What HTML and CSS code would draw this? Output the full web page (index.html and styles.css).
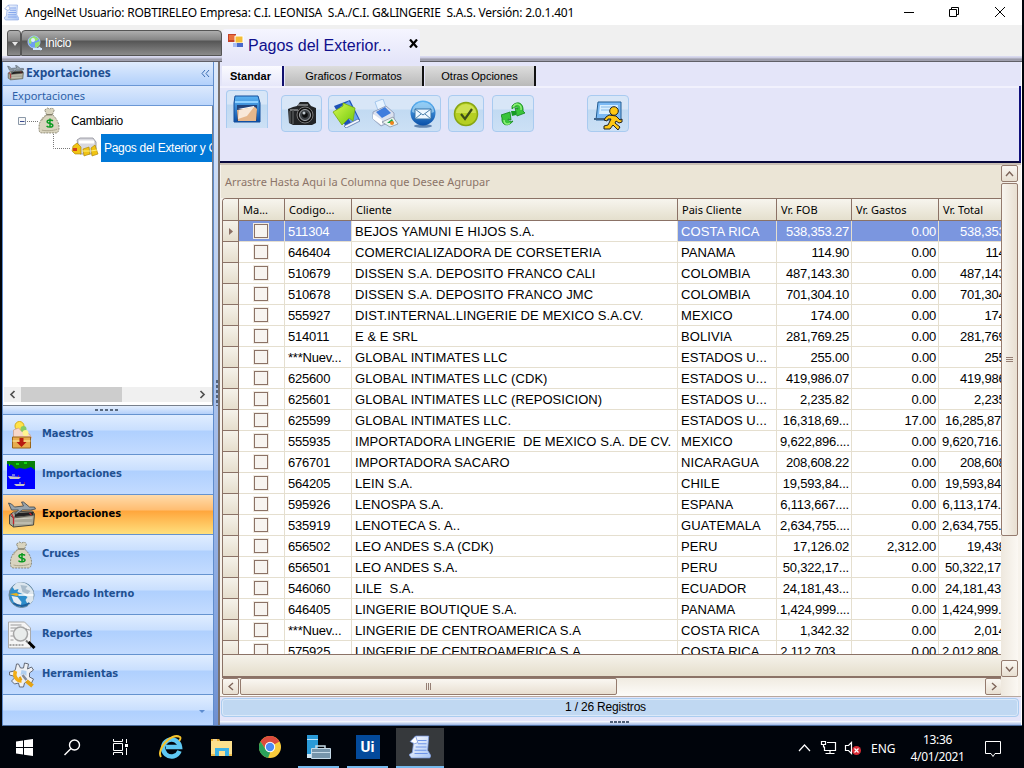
FILE: index.html
```html
<!DOCTYPE html>
<html lang="es">
<head>
<meta charset="utf-8">
<title>AngelNet</title>
<link rel="stylesheet" href="styles.css">
</head>
<body>
<svg class="defs" width="0" height="0">
  <defs>
    <linearGradient id="gBlue" x1="0" y1="0" x2="0" y2="1"><stop offset="0" stop-color="#5cb4f4"/><stop offset="1" stop-color="#0a4fa8"/></linearGradient>
    <linearGradient id="gGreen" x1="0" y1="0" x2="1" y2="1"><stop offset="0" stop-color="#d8f850"/><stop offset="1" stop-color="#6cc80c"/></linearGradient>
    <linearGradient id="gPage" x1="0" y1="0" x2="1" y2="1"><stop offset="0" stop-color="#ffffff"/><stop offset="1" stop-color="#a8c4f4"/></linearGradient>
  </defs>
  <symbol id="doc" viewBox="0 0 20 22"><path d="M6 1h12l-1 13 3 5-1 2H2l-2-3 3-2 1-8-2-2z" fill="url(#gPage)" stroke="#7d9be0" stroke-width=".7"/><path d="M6 1L1 6l4 2 3-1z" fill="#fff" stroke="#6c8cd8" stroke-width=".7"/><path d="M8 5h8M8 8h8M6 11h10M5 14h11M5 17h12" stroke="#6e94e8" stroke-width="1"/></symbol>
  <symbol id="bag" viewBox="0 0 24 28"><path d="M7 3l3-2 2 1 3-1 2 2-2 5c3 2 7 8 7 13 0 3-1 6-3 6H4c-3 0-3-3-3-6C1 15 5 10 9 8z" fill="#d9d4bf" stroke="#77735f" stroke-width=".8" stroke-dasharray="2 1"/><path d="M4 14c2-4 4-5 6-6h5M4 24c3 1 12 1 16-1" stroke="#aaa48c" fill="none"/><path d="M9 8h6" stroke="#6b6656"/><path d="M15.500 14.500c-1-1.500-6-1.500-6 .8 0 2.500 6 1.200 6 3.800 0 2.300-5.500 2.200-6.500.5M12.500 12v9.500" stroke="#0a9a20" stroke-width="1.500" fill="none"/></symbol>
  <symbol id="plane" viewBox="0 0 28 28"><path d="M2 14l4-3 19-1 2 3-1 11-20 2-4-3z" fill="#a9a899" stroke="#4b4940"/><path d="M2 14l4 3 21-3M6 17v9" stroke="#5c5a50" fill="none"/><path d="M7 18l18-1M7 22h17" stroke="#d0cfc2"/><path d="M8 12l18-1v3l-19 2z" fill="#222"/><path d="M4 13l2 4v6M22 12l2 2" stroke="#c3242c" stroke-width="1.300" fill="none"/><path d="M1 2l3 1 3 3 9-1-2-4 2 0 6 5 5 0 1 2-5 1-8 0-6 4-2 0 4-4-7 0z" fill="#97a3ac" stroke="#39424a" stroke-width=".8"/></symbol>
  <symbol id="globe" viewBox="0 0 26 28"><circle cx="13" cy="14" r="12.500" fill="#2d8dcb" stroke="#6f8698"/><path d="M8 2c7-3 15 3 17 9v8l-5 6-3-6 2-3-5-3-5-2 1-3-4 1-2-3z" fill="#dce6ee"/><path d="M12 4l7 1-2 3 5 2-3 3-5-2z" fill="#a9bccb"/><path d="M3 15l6 1 4 5-1 5-6-3z" fill="#e5edf4"/><path d="M1 13l7-1 3 2-3 1z" fill="#e8b31d"/><path d="M10 14h15" stroke="#fff" stroke-width="1.500"/><path d="M5 22q8 6 16 0" stroke="#1c5f9c" stroke-width="2" fill="none"/></symbol>
</svg>

<div class="desktop">
  <main class="window">
    <header class="titlebar">
      <svg class="app-icon" width="15" height="17"><use href="#doc"/></svg>
      <span class="title">AngelNet Usuario: ROBTIRELEO Empresa: C.I. LEONISA&nbsp; S.A./C.I. G&amp;LINGERIE&nbsp; S.A.S. Versión: 2.0.1.401</span>
      <svg class="win-controls" width="110" height="24" fill="none" stroke="#000"><path d="M5 11.500h10"/><path d="M50.500 8.500h7v7h-7zM52.500 8.500v-2h7v7h-2"/><path d="M96 6l10 10M106 6l-10 10"/></svg>
    </header>
    <nav class="doc-tabs">
      <span class="tab-menu"><svg width="7" height="4"><path d="M0 0h6L3 4z" fill="#e8e8e8"/></svg></span>
      <span class="doc-tab"><svg width="17" height="17" viewBox="0 0 17 17"><circle cx="7" cy="7" r="6" fill="#6d9df0" stroke="#aac8fa"/><path d="M2 4l5-3 5 3-3 2-4-1-1 4-2-1zM8 8l5-2-1 5-4 2z" fill="#95e26c"/><circle cx="6" cy="5" r="2" fill="#dff0ff"/><path d="M6 14h9M12 12l2 3" stroke="#cfe5ff" stroke-width="2"/></svg>Inicio</span>
      <span class="doc-tab active"><svg width="16" height="16" viewBox="0 0 16 16"><path d="M0 1h8v8H0z" fill="#c5422a"/><path d="M1 2h6v5H1z" fill="#e8703c"/><path d="M7 3h8v7H7z" fill="#f4bd35" stroke="#fff"/><path d="M8 10h7v4H8z" fill="#4868ca"/><path d="M5 10h4v4H5z" fill="#a7bcf5"/></svg><span class="doc-name">Pagos del Exterior...</span><svg class="close" width="10" height="9"><path d="M1 .5l7 8M8 .5l-7 8" stroke="#000" stroke-width="2.200"/></svg></span>
    </nav>
    <div class="body">
      <aside class="sidebar">
        <div class="side-head"><svg width="17" height="16" viewBox="0 0 28 28" preserveAspectRatio="none"><use href="#plane"/></svg><b>Exportaciones</b><svg class="collapse" width="9" height="9" fill="none" stroke="#3d6eb3"><path d="M4 1L1 4.500 4 8M8 1L5 4.500 8 8"/></svg></div>
        <div class="side-sub">Exportaciones</div>
        <div class="tree">
          <div class="node root"><svg width="20" height="28" fill="none"><path d="M.5 10.500h7v7h-7z" stroke="#8b98a8" fill="#f8f8f8"/><path d="M2 14.500h4.500" stroke="#3b4c90"/><path d="M9 14.500h11" stroke="#777" stroke-dasharray="1 1"/></svg><svg width="23" height="27"><use href="#bag"/></svg><span>Cambiario</span></div>
          <div class="node leaf"><svg width="17" height="28" fill="none" stroke="#777" stroke-dasharray="1 1"><path d="M.5 0v14.500h17"/></svg><svg width="28" height="22" viewBox="0 0 28 22"><path d="M6 3l3-2h13l3 4v8l-4 4H9z" fill="#d9d9df" stroke="#8c8c96" stroke-width=".8"/><path d="M8 5h15" stroke="#fff" stroke-width="3"/><path d="M2 9l4-3 4 4v7H4l-3-3zM12 12l6-2 1 7-6 2zM20 11l4-3 3 9-6 2z" fill="#f1c414" stroke="#a67f00" stroke-width=".6"/><path d="M2 11h4v3H2z" fill="#d44019"/><path d="M11 14h8M20 14l6-1" stroke="#fff17b"/></svg><span class="picked">Pagos del Exterior y Cre</span></div>
          <div class="tree-scroll"><svg width="17" height="15" fill="none" stroke="#505050" stroke-width="1.700"><path d="M10.500 4L7 7.500l3.500 3.500"/></svg><i></i><svg width="18" height="15" fill="none" stroke="#505050" stroke-width="1.700"><path d="M6.500 4l3.500 3.500L6.500 11"/></svg></div>
        </div>
        <div class="grip"><i></i></div>
        <ul class="modules">
          <li><svg width="28" height="30" viewBox="0 0 28 30"><circle cx="12" cy="6" r="4.500" fill="#ffe34a" stroke="#d9ac1a"/><path d="M6 10l5-2 4 4 7 2 2 4H6z" fill="#f7d7c8" stroke="#cf9070" stroke-width=".6"/><circle cx="16" cy="9" r="3" fill="#86cc67"/><circle cx="18" cy="13" r="3" fill="#fff58e"/><path d="M5 17h18v11H5z" fill="#e8ad4e" stroke="#9a6518"/><path d="M5 21h18" stroke="#fff0a0"/><path d="M12 18h4v4h3l-5 5-5-5h3z" fill="#b71b10"/></svg><b>Maestros</b></li>
          <li><svg width="28" height="28"><path d="M0 0h28v28H0z" fill="#0000ff"/><path d="M0 0h28v9l-4-3-6 2-5-1-4 1-4-4-5-1z" fill="#088008"/><path d="M9 3h3M17 2h3M2 4h1" stroke="#13d713" stroke-width="2"/><path d="M1 15l13 1-2 2H3zM7 23h11l-1 2H9z" fill="#c6c6c6"/><path d="M5 14h3M12 22h2" stroke="#ddd"/><path d="M11 15h1M17 22h1" stroke="#e22"/></svg><b>Importaciones</b></li>
          <li class="on"><svg width="29" height="28"><use href="#plane"/></svg><b>Exportaciones</b></li>
          <li><svg width="26" height="28"><use href="#bag"/></svg><b>Cruces</b></li>
          <li><svg width="28" height="28"><use href="#globe"/></svg><b>Mercado Interno</b></li>
          <li><svg width="28" height="28" viewBox="0 0 28 28"><path d="M1 1h16l6 6v20H1z" fill="#f5f5f5" stroke="#aaa"/><path d="M3 4h11M3 7h6M3 10h3M3 15h3M3 19h3" stroke="#999"/><path d="M2 24h15M18 8l4 1" stroke="#555" stroke-dasharray="2 1"/><circle cx="13" cy="13" r="7" fill="#e9eceb" stroke="#a5a5a5" stroke-width="1.500"/><path d="M18.500 19.500l2 2" stroke="#777" stroke-width="2"/><path d="M21 21l6 6" stroke="#000" stroke-width="3"/></svg><b>Reportes</b></li>
          <li><svg width="28" height="28" viewBox="0 0 28 28"><path d="M9 3l2 0 2 4 3 0 1-5 4 1-1 5 4-2 2 3-4 3v4l4 2-2 4-4-2-3 2-1 4h-4l-1-4-4 1-3-3 3-3-1-2-4-1v-3l5-1 1-2z" fill="#eef0f4" stroke="#656b78"/><path d="M8 10c-2 5 1 10 6 10" stroke="#f2ae16" stroke-width="3.500" fill="none"/><path d="M14 9l5 1v5l-3-2-3 1z" fill="#b0cff0"/><path d="M14 17l-2 1M19 20l6 5" stroke="#e5a313" stroke-width="4"/><path d="M15 14l4 5" stroke="#848b99" stroke-width="2.500"/></svg><b>Herramientas</b></li>
          <li class="last"><svg width="7" height="4"><path d="M0 0h6L3 3z" fill="#5e8dd0"/></svg></li>
        </ul>
      </aside>
      <div class="splitter"><i></i></div>
      <section class="content">
        <div class="ribbon-tabs"><span class="rt current">Standar</span><span class="rt second">Graficos / Formatos</span><span class="rt third">Otras Opciones</span></div>
        <div class="ribbon">
          <span class="tool save"><svg width="30" height="32" viewBox="0 0 30 32"><path d="M3 2h23l2 7v19H2V9z" fill="url(#gBlue)" stroke="#144f9b"/><path d="M3 8h23" stroke="#8fd1ff" stroke-width="2"/><path d="M5 11h20v16H5z" fill="#22447c"/><path d="M6 15l16-3 1 3H6z" fill="#fff"/><path d="M5 16l18-3 2 2-1 12H6z" fill="#e6b78b"/><path d="M7 16l15-3-7 9-9 3z" fill="#f8e8d8"/></svg></span>
          <span class="tool cam"><svg width="30" height="26" viewBox="0 0 30 26"><path d="M1 8l5-2 4-1 3-4h8l3 4 5 2v15l-4 2H6l-4-2z" fill="#222426"/><path d="M11 4h10M3 9h8" stroke="#8a8d90" stroke-width="1.500"/><path d="M3 10v12M6 9v14" stroke="#515456" stroke-width="1.500"/><circle cx="18" cy="14" r="8" fill="#111" stroke="#777"/><circle cx="18" cy="14" r="5.500" fill="#3a3e42" stroke="#a5a9ad"/><circle cx="18" cy="14" r="2.800" fill="#0b0c0d"/><circle cx="17" cy="12" r="1.500" fill="#c0c8ce"/></svg></span>
          <span class="tool trio">
            <svg width="29" height="29" viewBox="0 0 29 29"><path d="M2 7l16-6 10 20-14 7z" fill="#1d51b8"/><path d="M17 2l10 19-7 4L8 8z" fill="#69a3ef"/><path d="M12 27l14-7 2 2-14 7z" fill="#f4f7ff" stroke="#46649d" stroke-width=".7"/><path d="M1 13l10-6 0-3 12 5-2 13-4-3-7 7z" fill="url(#gGreen)" stroke="#78ab0c" stroke-width=".8"/></svg>
            <svg width="28" height="29" viewBox="0 0 28 29"><path d="M4 3l8-3 4 11-8 3z" fill="#e7f3ff" stroke="#8cb7e6" stroke-width=".7"/><path d="M2 13l13-6 8 7v7L10 27l-8-7z" fill="#dce2ef" stroke="#8794b3" stroke-width=".8"/><path d="M5 13l9-5 6 6-9 5z" fill="#407ddd"/><path d="M2 15l9 6v5l-9-6z" fill="#fff"/><path d="M11 23l11-5 5 7-8 3z" fill="#ecf4ef" stroke="#66758a" stroke-width=".6"/><path d="M16 24l5-4 2 4z" fill="#1aa844"/><circle cx="21" cy="24" r="2" fill="#f0831c"/></svg>
            <svg width="28" height="28" viewBox="0 0 28 28"><ellipse cx="14" cy="26" rx="9" ry="1.800" fill="#1b4a86" opacity=".6"/><circle cx="14" cy="13" r="12.500" fill="url(#gBlue)"/><path d="M3 12a11 10 0 0 1 22 0q-11 6-22 0z" fill="#bde5fa" opacity=".6"/><path d="M6 9h16v10H6z" fill="#eef8ff" stroke="#3372a9"/><path d="M6 9l8 6 8-6M6 19l6-5M22 19l-6-5" fill="none" stroke="#467da8"/></svg>
          </span>
          <span class="tool check"><svg width="26" height="26" viewBox="0 0 26 26"><circle cx="13" cy="13" r="11.500" fill="#b5cf22" stroke="#87a513" stroke-width="1.500"/><path d="M3 12a10 9 0 0 1 20 0z" fill="#cee151"/><path d="M8 13l4 5 7-10" stroke="#3c4c19" stroke-width="2.200" fill="none"/></svg></span>
          <span class="tool swap"><svg width="24" height="26" viewBox="0 0 24 26"><path d="M11 5c5-6 12-3 11 5l2 2-8 3-2-8 3 1c-1-3-4-2-6 0zM12 20c-4 6-12 5-11-3l-1-3 9-3 1 8-3-1c0 2 3 3 5 2z" fill="#38c43a" stroke="#12871b" stroke-width=".8"/><path d="M12 6c3-5 9-3 8 3M3 19c0 4 3 5 6 3" stroke="#90ef78" stroke-width="1.500" fill="none"/><path d="M10 10h5v4l-4 1z" fill="#159a23"/></svg></span>
          <span class="tool exit"><svg width="29" height="30" viewBox="0 0 29 30"><path d="M4 2h23v18H2z" fill="#7cbaf4" stroke="#225c91"/><path d="M6 5h18l-1 9H5z" fill="#d9efff"/><path d="M7 7h12M7 10h8" stroke="#85b9e9"/><path d="M0 19h14" stroke="#3e6288" stroke-width="2"/><circle cx="20" cy="11" r="4.300" fill="#ffc814" stroke="#222"/><path d="M12 17l3-2 7 1 4 4 2-1v3l-3 1-3-2-1 2 5 4-2 3-5-5-3 4h-6l0-3 4-1 3-6-3 0-1 2-3-1z" fill="#ffc814" stroke="#222"/></svg></span>
        </div>
        <div class="grid-box">
          <div class="grid-main">
            <div class="group-hint"><span>Arrastre Hasta Aqui la Columna que Desee Agrupar</span></div>
            <div class="viewport">
              <table>
                <colgroup><col class="c0"><col class="c1"><col class="c2"><col class="c3"><col class="c4"><col class="c5"><col class="c6"><col class="c7"></colgroup>
                <thead><tr><th><th>Ma...<th>Codigo...<th>Cliente<th>Pais Cliente<th>Vr. FOB<th>Vr. Gastos<th>Vr. Total</tr></thead>
                <tbody>
                <tr class="focus"><td><svg width="4" height="7"><path d="M0 0l4 3.500L0 7z" fill="#8b6f64"/></svg><td><i></i><td>511304<td>BEJOS YAMUNI E HIJOS S.A.<td>COSTA RICA<td>538,353.27<td>0.00<td>538,353.27
                <tr><td><td><i></i><td>646404<td>COMERCIALIZADORA DE CORSETERIA<td>PANAMA<td>114.90<td>0.00<td>114.90
                <tr><td><td><i></i><td>510679<td>DISSEN S.A. DEPOSITO FRANCO CALI<td>COLOMBIA<td>487,143.30<td>0.00<td>487,143.30
                <tr><td><td><i></i><td>510678<td>DISSEN S.A. DEPOSITO FRANCO JMC<td>COLOMBIA<td>701,304.10<td>0.00<td>701,304.10
                <tr><td><td><i></i><td>555927<td>DIST.INTERNAL.LINGERIE DE MEXICO S.A.CV.<td>MEXICO<td>174.00<td>0.00<td>174.00
                <tr><td><td><i></i><td>514011<td>E &amp; E SRL<td>BOLIVIA<td>281,769.25<td>0.00<td>281,769.25
                <tr><td><td><i></i><td>***Nuev...<td>GLOBAL INTIMATES LLC<td>ESTADOS U...<td>255.00<td>0.00<td>255.00
                <tr><td><td><i></i><td>625600<td>GLOBAL INTIMATES LLC (CDK)<td>ESTADOS U...<td>419,986.07<td>0.00<td>419,986.07
                <tr><td><td><i></i><td>625601<td>GLOBAL INTIMATES LLC (REPOSICION)<td>ESTADOS U...<td>2,235.82<td>0.00<td>2,235.82
                <tr><td><td><i></i><td>625599<td>GLOBAL INTIMATES LLC.<td>ESTADOS U...<td>16,318,69...<td>17.00<td class="long">16,285,87
                <tr><td><td><i></i><td>555935<td>IMPORTADORA LINGERIE&nbsp; DE MEXICO S.A. DE CV.<td>MEXICO<td>9,622,896....<td>0.00<td class="long">9,620,716.
                <tr><td><td><i></i><td>676701<td>IMPORTADORA SACARO<td>NICARAGUA<td>208,608.22<td>0.00<td>208,608.22
                <tr><td><td><i></i><td>564205<td>LEIN S.A.<td>CHILE<td>19,593,84...<td>0.00<td class="long">19,593,84
                <tr><td><td><i></i><td>595926<td>LENOSPA S.A.<td>ESPANA<td>6,113,667....<td>0.00<td class="long">6,113,174.
                <tr><td><td><i></i><td>535919<td>LENOTECA S. A..<td>GUATEMALA<td>2,634,755....<td>0.00<td class="long">2,634,755.
                <tr><td><td><i></i><td>656502<td>LEO ANDES S.A (CDK)<td>PERU<td>17,126.02<td>2,312.00<td>19,438.02
                <tr><td><td><i></i><td>656501<td>LEO ANDES S.A.<td>PERU<td>50,322,17...<td>0.00<td class="long">50,322,17
                <tr><td><td><i></i><td>546060<td>LILE&nbsp; S.A.<td>ECUADOR<td>24,181,43...<td>0.00<td class="long">24,181,43
                <tr><td><td><i></i><td>646405<td>LINGERIE BOUTIQUE S.A.<td>PANAMA<td>1,424,999....<td>0.00<td class="long">1,424,999.
                <tr><td><td><i></i><td>***Nuev...<td>LINGERIE DE CENTROAMERICA S.A<td>COSTA RICA<td>1,342.32<td>0.00<td>2,014.52
                <tr><td><td><i></i><td>575925<td>LINGERIE DE CENTROAMERICA S.A<td>COSTA RICA<td>2,112,703....<td>0.00<td class="long">2,012,808.
                </tbody>
              </table>
            </div>
            <div class="summary"></div>
            <div class="hscroll"><span class="btn"><svg width="6" height="9"><path d="M5 1L1 4.500 5 8" fill="none" stroke="#7d6459" stroke-width="1.400"/></svg></span><span class="thumb"><svg width="7" height="7"><path d="M1.500 0v7M3.500 0v7M5.500 0v7" stroke="#8a7266" stroke-width=".9"/></svg></span><span class="btn end"><svg width="6" height="9"><path d="M1 1l4 3.500L1 8" fill="none" stroke="#7d6459" stroke-width="1.400"/></svg></span></div>
          </div>
          <div class="vscroll"><span class="btn"><svg width="9" height="6"><path d="M1 5l3.500-4L8 5" fill="none" stroke="#7d6459" stroke-width="1.400"/></svg></span><span class="thumb"><svg width="7" height="7"><path d="M0 1.500h7M0 3.500h7M0 5.500h7" stroke="#8a7266" stroke-width=".9"/></svg></span><span class="btn down"><svg width="9" height="6"><path d="M1 1l3.500 4L8 1" fill="none" stroke="#7d6459" stroke-width="1.400"/></svg></span></div>
        </div>
        <div class="status"><span>1 / 26 Registros</span></div>
        <div class="bottom-grip"><i></i></div>
      </section>
    </div>
  </main>
  <footer class="taskbar">
    <span class="task"><svg width="17" height="17"><path d="M0 2.500l7-1v6.500H0zM8 1.300l9-1.300v8H8zM0 9h7v6.500l-7-1zM8 9h9v8l-9-1.300z" fill="#fff"/></svg></span>
    <span class="task"><svg width="17" height="17" fill="none" stroke="#fff" stroke-width="1.400"><circle cx="10.500" cy="6" r="5"/><path d="M7 9.500L.5 16"/></svg></span>
    <span class="task"><svg width="17" height="16" fill="none" stroke="#fff"><path d="M1.500 0v2.500h9V0M1.500 4.500h9v7h-9zM1.500 16v-2.500h9V16M14.500 0v4M14.500 9v7" /><path d="M13 5h3v3h-3z" fill="#fff" stroke="none"/></svg></span>
    <span class="task wide"><svg width="24" height="24" viewBox="0 0 24 24"><path d="M20.500 16A8.500 8.500 0 1 1 21 12H7" fill="none" stroke="#5fc9f3" stroke-width="4.500"/><path d="M2 22C-3 15 12-3 21 2c1 1 0 3-1 4" fill="none" stroke="#f6c42c" stroke-width="2"/></svg></span>
    <span class="task"><svg width="22" height="19" viewBox="0 0 22 19"><path d="M0 1h8l1 2h12v15H0z" fill="#fce08d"/><path d="M0 1h8l1 2H0z" fill="#e7ac2e"/><path d="M2 2h4" stroke="#fff"/><path d="M4 10h14v8h-4v-5H8v5H4z" fill="#3cb2e6"/><path d="M0 17h4M18 17h3" stroke="#edbd4c" stroke-width="2"/></svg></span>
    <span class="task"><svg width="22" height="22" viewBox="0 0 22 22"><circle cx="11" cy="11" r="11" fill="#f9cb3c"/><path d="M1.500 5.500A11 11 0 0 1 20.500 5.500L16 8H11L7 14z" fill="#dc4b3e"/><path d="M1.500 5.500L6.700 13.500 11 16l0 1-2 5A11 11 0 0 1 1.500 5.500z" fill="#2ba25a"/><circle cx="11" cy="11" r="5.200" fill="#fff"/><circle cx="11" cy="11" r="4.200" fill="#4c8bf5"/></svg></span>
    <span class="task open"><svg width="24" height="24" viewBox="0 0 24 24"><path d="M0 0h11v23H0z" fill="#2a9ad8"/><path d="M0 4.500h11" stroke="#b8e4ff"/><path d="M0 19h5v4H0z" fill="#d4e8f5"/><path d="M9 14v-3h9v3" fill="none" stroke="#c6dbe8" stroke-width="1.500"/><path d="M4.500 13.500h19v10h-19z" fill="#7695ab" stroke="#c5dae8"/><path d="M5 17.500h18" stroke="#c5dae8"/></svg></span>
    <span class="task open"><b class="ui">Ui</b></span>
    <span class="task open focus"><svg width="22" height="24"><use href="#doc"/></svg></span>
    <div class="tray">
      <svg width="64" height="24" fill="none" stroke="#fff" stroke-width="1.200"><path d="M1 15l5.500-6 5.500 6"/><path d="M29 6.500h8.500v8H26.500v-4M32 14.500v3M27.500 17.500h9M23.500 5.500h4v3h-4zM25.500 8.500v3"/><path d="M47.500 9.500h3l3-3v11l-3-3h-3z"/><circle cx="58.500" cy="14.500" r="4.500" fill="#d92b35" stroke="none"/><path d="M56.500 12.500l4 4M60.500 12.500l-4 4"/></svg>
      <span class="lang">ENG</span>
      <span class="clock"><span>13:36</span><span>4/01/2021</span></span>
      <svg class="note" width="17" height="17" fill="none" stroke="#fff"><path d="M.5.500h15v12H10l-2 3-2-3H.5z"/></svg>
    </div>
  </footer>
</div>
</body>
</html>
```
FILE: styles.css
```css
* { box-sizing: border-box; }
body { margin: 0; font-family: "Liberation Sans", sans-serif; }
svg { display: block; flex: none; }
i { display: block; flex: none; }
.defs { position: absolute; }
.desktop { width: 1024px; height: 768px; overflow: hidden; background: #00040b; display: flex; flex-direction: column; }
.window { width: 1020px; height: 726px; margin-left: 2px; flex: none; display: flex; flex-direction: column; border-bottom: 1px solid #4d6e9e; background: #e4e5f9; }

.titlebar { height: 25px; flex: none; background: #fff; display: flex; align-items: center; padding-left: 2px; }
.title { font: 12px/16px "Noto Sans", sans-serif; letter-spacing: -.21px; margin-left: 6px; white-space: nowrap; }
.win-controls { margin-left: auto; margin-right: 13px; }

.doc-tabs { height: 37px; flex: none; background: linear-gradient(#f0f0f0 31px, #dedff6 31px, #c8c8dc 33px, #9a9aa8 34px, #a2a2b0 36px, #606068 36px); display: flex; padding-left: 5px; }
.tab-menu { width: 14px; height: 26px; margin-top: 5px; padding: 11px 0 0 4px; border: 1px solid #555; border-radius: 3px 3px 0 0; background: linear-gradient(#b0b0b0, #858585 10px, #555 11px, #8a8a8a); }
.doc-tab { display: flex; align-items: center; width: 201px; height: 26px; margin-top: 5px; padding-left: 5px; color: #fff; font-size: 12px; letter-spacing: -.3px; border: 1px solid #555; border-radius: 4px 4px 0 0; background: linear-gradient(#adadad, #858585 9px, #555 10px, #8a8a8a); gap: 1px; }
.doc-tab.active { width: 198px; height: 33px; margin-top: 4px; padding: 0 0 4px 6px; border: 0; background: linear-gradient(#f5f5ff, #e4e5f9); color: #10108c; align-items: flex-start; gap: 4px; }
.doc-tab.active > svg { margin-top: 4px; }
.doc-name { font-size: 16px; line-height: 18px; letter-spacing: 0; margin-top: 8px; }
.doc-tab.active .close { margin: 10px 0 0 14px; }

.body { flex: 1; min-height: 0; display: flex; }
.sidebar { width: 212px; flex: none; display: flex; flex-direction: column; border: 1px solid #5f8ccc; border-top: 0; background: #bdd7fb; }
.side-head { height: 24px; flex: none; display: flex; align-items: center; padding: 0 3px 1px 4px; background: linear-gradient(#e0ecfd, #b2d0fb); border-bottom: 1px solid #6b97d5; color: #1f4f91; }
.side-head b { font: bold 12px/16px "Open Sans", sans-serif; margin-left: 2px; }
.collapse { margin-left: auto; }
.side-sub { height: 20px; flex: none; padding-left: 9px; font: 11px/19px "Noto Sans", sans-serif; color: #2c5fa7; background: linear-gradient(#dce9fd, #bcd6fb); border-bottom: 1px solid #6b97d5; }
.tree { height: 300px; flex: none; background: #fff; border: 1px solid #777f8b; border-width: 0 1px 1px 0; display: flex; flex-direction: column; font-size: 12px; letter-spacing: -.3px; }
.node { height: 28px; display: flex; align-items: center; white-space: nowrap; overflow: hidden; }
.root { margin-left: 15px; padding-top: 1px; }
.root span { margin-left: 10px; }
.leaf { margin-left: 50px; }
.picked { background: #0078d7; color: #fff; flex: 1; line-height: 28px; margin-left: 2px; padding-left: 3px; overflow: hidden; }
.leaf svg:first-child { margin-right: 1px; }
.tree-scroll { height: 15px; margin: auto 0 3px 1px; background: #f0f0f0; display: flex; }
.tree-scroll i { width: 101px; background: #cdcdcd; margin-right: auto; }
.grip { height: 8px; flex: none; background: linear-gradient(#e3eefd, #b4d0fa); }
.grip i { width: 24px; height: 2px; margin: 3px 0 0 92px; background: repeating-linear-gradient(90deg, #596a80 0 3px, transparent 3px 5px); }
.modules { list-style: none; margin: 0; padding: 0; flex: 1; }
.modules li { height: 40px; border-top: 1px solid #6593cf; background: linear-gradient(#e0edff 0, #c9dffe 15px, #afd0fe 16px, #c3dbff 39px); display: flex; align-items: center; color: #1e5091; padding-left: 4px; }
.modules svg { width: 29px; }
.modules b { font: bold 11px/16px "DejaVu Sans Condensed", "DejaVu Sans", sans-serif; margin-left: 6px; padding-bottom: 1px; }
.modules .on { background: linear-gradient(#ffdbaa, #ffbd71 15px, #ffa63c 16px, #ffdf7d 39px); color: #000; }
.modules .last { height: 31px; padding: 4px 7px 0 0; justify-content: flex-end; }
.modules .last svg { width: 7px; }
.splitter { width: 6px; flex: none; border-right: 2px solid #78716f; background: linear-gradient(#dde9fb, #86a5df 85%, #6d8fd0); }
.splitter i { width: 2px; height: 26px; margin: 318px 0 0 2px; background: repeating-linear-gradient(#53647e 0 3px, transparent 3px 5px); }

.content { flex: 1; min-width: 0; display: flex; flex-direction: column; border-right: 1px solid #fff; }
.ribbon-tabs { height: 24px; flex: none; display: flex; padding: 4px 0 0 2px; font-size: 11px; background: #e4e5f9; }
.rt { height: 20px; border-right: 2px solid #111; line-height: 20px; text-align: center; background: linear-gradient(#ddd, #b9b9b9); white-space: nowrap; }
.rt.current { width: 62px; height: 22px; background: linear-gradient(#fbfbff, #e4e5f9); font-weight: bold; border-right-color: #10106e; padding-right: 3px; }
.second { width: 139px; margin-left: 1px; }
.third { width: 111px; margin-left: 1px; }
.ribbon { height: 77px; flex: none; border: 2px solid #10107c; border-width: 0 2px 2px 0; border-bottom: 2px solid #08083c; box-shadow: inset 0 2px #f1f1fd; display: flex; align-items: flex-start; padding: 9px 0 0 6px; }
.tool { height: 37px; display: flex; align-items: center; justify-content: center; border: 1px solid #a9cbf0; border-radius: 4px; background: linear-gradient(#d8e6f7 13px, #c1daf2 14px, #cce0f5); }
.save { width: 42px; height: 38px; margin-top: -5px; border-bottom: 0; border-radius: 4px 4px 0 0; }
.cam { width: 41px; margin-left: 13px; }
.trio { width: 113px; margin-left: 6px; gap: 10px; }
.check { width: 36px; margin-left: 7px; }
.swap { width: 42px; margin-left: 8px; }
.exit { width: 42px; margin-left: 53px; }
.exit svg { margin-top: 3px; }

.grid-box { height: 534px; flex: none; border-top: 2px solid #c9bfb4; display: flex; background: #f7f3ec; padding-left: 2px; border-bottom: 1px solid #b8a89e; }
.grid-main { width: 780px; flex: none; display: flex; flex-direction: column; }
.group-hint { height: 33px; flex: none; background: #ebe5d6; color: #8c7468; font: 11px/34px "Noto Sans", sans-serif; padding-left: 4px; margin-left: -1px; }
.viewport { height: 456px; overflow: hidden; background: #fff; border-top: 1px solid #8b7266; border-left: 1px solid #8b7266; border-radius: 4px 0 0 0; }
table { table-layout: fixed; width: 803px; border-collapse: separate; border-spacing: 0; }
.c0 { width: 16px; } .c1 { width: 46px; } .c2 { width: 67px; } .c3 { width: 326px; } .c4 { width: 99px; } .c5 { width: 75px; } .c6 { width: 87px; } .c7 { width: 87px; }
th { height: 22px; padding: 0 0 0 4px; text-align: left; font: 11px/14px "Noto Sans", sans-serif; color: #000; border-right: 1px solid #8b7266; border-bottom: 1px solid #8b7266; background: linear-gradient(#f7f5ee, #e4dfcd); white-space: nowrap; overflow: hidden; }
td { height: 21px; padding: 0 2px 0 3px; border-right: 1px solid #e5dfcf; border-bottom: 1px solid #e5dfcf; font-size: 13px; line-height: 15px; letter-spacing: -.2px; white-space: nowrap; overflow: hidden; }
td:first-child { border-color: #8b7266; background: linear-gradient(#f5f2ea, #e6decd); padding: 0 0 0 6px; }
td:nth-child(4), td:nth-child(5) { letter-spacing: .07px; }
td:nth-child(n+6) { text-align: right; }
td:nth-child(8).long { padding-right: 24px; text-align: right; }
td i { width: 14px; height: 14px; margin-left: 12px; border: 1px solid #8b7266; background: #f7f4f0; box-shadow: 0 0 0 1px #f1ece3; }
.focus td:nth-child(n+2) { background: #7b96df; color: #fff; }
.focus td:nth-child(4) { background: #fff; color: #000; }
.summary { height: 24px; flex: none; border: 1px solid #8b7266; border-width: 1px 1px 2px; background: linear-gradient(#f5f2ea, #e5decc); }
.hscroll { height: 18px; flex: none; display: flex; padding-right: 0; background: linear-gradient(#f0ebe1, #fdfcf9); }
.btn, .thumb { display: flex; align-items: center; justify-content: center; border: 1px solid #947b6e; border-radius: 2px; background: linear-gradient(#faf7f2, #e8dfd1); flex: none; }
.btn { width: 17px; height: 17px; }
.hscroll .thumb { width: 377px; height: 17px; margin-left: 1px; }
.hscroll .end { margin-left: auto; }
.vscroll { width: 17px; margin-left: -1px; display: flex; flex-direction: column; background: linear-gradient(90deg, #eee8de, #fbf8f3); }
.vscroll .thumb { height: 353px; margin-top: 1px; background: linear-gradient(90deg, #f8f5ef, #e8dfd1); }
.vscroll .down { margin: auto 0 19px; }
.status { height: 19px; flex: none; margin: 1px 2px 0 1px; padding: 1px; border: 1px solid #abcdf0; border-radius: 4px; background: #c0d8f2; box-shadow: inset 0 0 0 1px #dbe9f9; text-align: center; font-size: 12px; line-height: 15px; letter-spacing: -.2px; }
.status span { margin-right: 29px; }
.bottom-grip { height: 4px; margin-top: auto; background: linear-gradient(#fff, #9db7e6); }
.bottom-grip i { width: 19px; height: 2px; margin-left: 390px; background: repeating-linear-gradient(90deg, #4e5f78 0 3px, transparent 3px 4px); }

.taskbar { height: 40px; flex: none; margin-top: 2px; display: flex; color: #fff; }
.task { width: 48px; height: 40px; display: flex; align-items: center; justify-content: center; border-bottom: 2px solid transparent; }
.task.wide { width: 54px; }
.task.open { border-bottom-color: #76b9ed; width: 41px; margin: 0 4px; }
.task.open.focus { width: 48px; margin-left: 4px; background: #36393c; }
.ui { width: 24px; height: 24px; background: #034a9b; font: bold 15px/24px Roboto, sans-serif; text-align: center; }
.tray { margin-left: auto; display: flex; align-items: center; width: 226px; font: 12px/17px "Noto Sans", sans-serif; flex: none; }
.lang { margin-left: 9px; }
.clock { width: 60px; margin-left: 12px; display: flex; flex-direction: column; text-align: center; letter-spacing: -.35px; white-space: nowrap; }
.note { margin-left: 17px; margin-top: 2px; }
```
